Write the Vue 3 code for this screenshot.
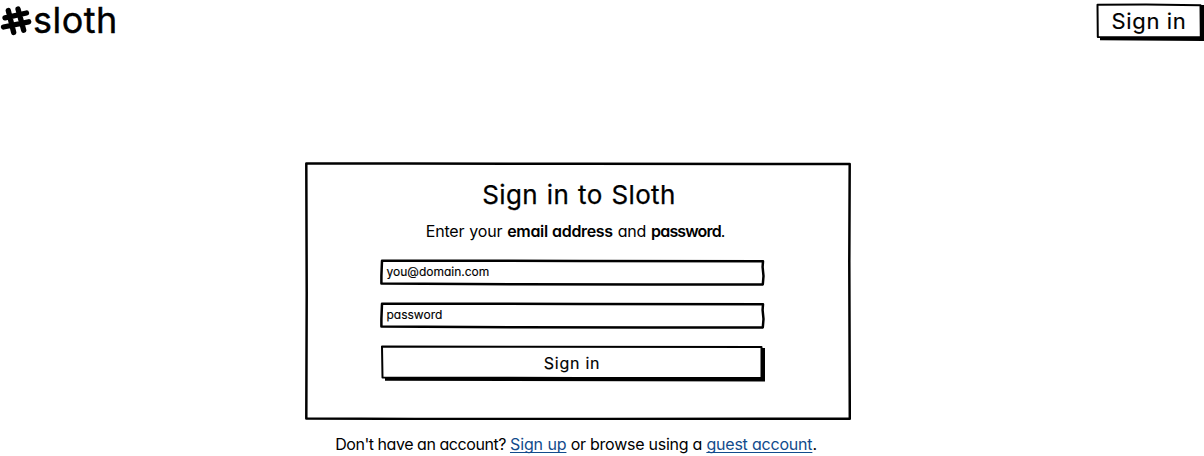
<script setup>
</script>

<template>
  <div class="page">
    <header class="bar">
      <div class="brand">
        <svg class="hash" width="32" height="31" viewBox="0 0 32 31">
          <path d="M8.300 4.500 13.700 26.500M18 3 23.700 24.200M5 11.800 26.500 7M3.500 21 28.700 15.800" />
        </svg>
        <span class="name">sloth</span>
      </div>
      <button class="top-btn">
        <svg class="frame" width="108" height="41" viewBox="0 0 108 41">
          <path class="solid" d="M104 5H108V41L4 40.300V36H104Z" />
          <path class="line" d="M1.500 4.800 50 4.500 104.500 5.200 104.800 37 50 37.300 1.800 37Z" />
        </svg>
        <span>Sign in</span>
      </button>
    </header>

    <main class="main">
      <form class="card" @submit.prevent>
        <svg class="frame" width="546" height="258" viewBox="0 0 546 258">
          <path class="line wide" d="M1.300 1.500 100 1.500 280 1.800 544.700 2 544.300 100 544.800 256.700 300 257 110 256.900 1.300 256.400 1.700 130Z" />
        </svg>
        <h1>Sign in to Sloth</h1>
        <p class="hint">Enter your <b>email address</b> and <b class="tight">password</b>.</p>
        <div class="field">
          <svg class="frame" width="385" height="27" viewBox="0 0 385 27">
            <path class="line wide" d="M2 1.700 80 1.700 200 2 383 2.300 382.600 8 383.500 17 382.800 25.500 270 25.500 140 25.200 1.400 24.600 1.400 17Z" />
          </svg>
          <span>you@domain.com</span>
        </div>
        <div class="field">
          <svg class="frame" width="385" height="27" viewBox="0 0 385 27">
            <path class="line wide" d="M2 1.700 80 1.700 200 2 383 2.300 382.600 8 383.500 17 382.800 25.500 270 25.500 140 25.200 1.400 24.600 1.400 17Z" />
          </svg>
          <span>password</span>
        </div>
        <button class="submit">
          <svg class="frame" width="385" height="37" viewBox="0 0 385 37">
            <path class="solid" d="M381 3H385V36.500L5 35.800V32H381Z" />
            <path class="line" d="M2 1.600 140 1.800 381.500 2 381.500 33 200 33 2.500 32.600Z" />
          </svg>
          <span>Sign in</span>
        </button>
      </form>
      <p class="foot"><span class="ask">Don't have an account? </span><a class="up">Sign up</a><span class="or"> or browse using a </span><a>guest account</a>.</p>
    </main>
  </div>
</template>

<style>
body { background: #fff; }
</style>

<style scoped>
.page { width: 1204px; height: 456px; color: #000; font-family: Inter, "Liberation Sans", sans-serif; font-feature-settings: "cv11"; white-space: nowrap; }
.bar { display: flex; justify-content: space-between; height: 44px; }
.brand { display: flex; }
.hash { margin-top: 6px; fill: none; stroke: #000; stroke-width: 5.3; stroke-linecap: round; }
.name { margin-left: 1px; font-size: 36px; line-height: 41px; letter-spacing: 0.5px; -webkit-text-stroke: 0.4px #000; }
button { position: relative; padding: 0; border: 0; background: none; color: inherit; font: inherit; font-feature-settings: inherit; }
button span { position: relative; -webkit-text-stroke: 0.15px #000; }
.top-btn { width: 108px; height: 41px; font-size: 22px; line-height: 42px; letter-spacing: 0.65px; }
.top-btn span { left: -1px; }
.frame { position: absolute; left: 0; top: 0; display: block; }
.line { fill: #fff; stroke: #000; stroke-width: 2; stroke-linejoin: round; }
.wide { stroke-width: 2.5; }
.solid { fill: #000; }
.main { display: flex; flex-direction: column; align-items: center; width: 1156px; padding-top: 118px; }
.card { position: relative; display: flex; flex-direction: column; align-items: center; width: 546px; height: 258px; }
h1 { position: relative; margin: 17px 0 0 2px; font-size: 26px; font-weight: 400; line-height: 32px; letter-spacing: 0.35px; word-spacing: 1.2px; -webkit-text-stroke: 0.25px #000; }
.hint { position: relative; margin: 10px 5px 0 0; font-size: 16px; line-height: 20px; letter-spacing: -0.2px; word-spacing: 0.7px; }
b { font-weight: 600; letter-spacing: -0.35px; }
.tight { letter-spacing: -0.85px; }
.field { position: relative; width: 385px; height: 27px; margin: 16px 12px 0 0; font-size: 12px; line-height: 25px; -webkit-text-stroke: 0.15px #000; }
.hint + .field { margin-top: 18px; }
.field span { position: relative; display: block; margin-left: 7px; }
.submit { width: 385px; height: 37px; margin: 16px 12px 0 0; font-size: 16px; line-height: 34px; letter-spacing: 0.75px; }
.submit span { top: -1px; }
.foot { margin: 14px 4px 0 0; font-size: 16px; line-height: 20px; letter-spacing: -0.2px; }
.ask { letter-spacing: -0.45px; }
.up { letter-spacing: -0.1px; }
.or { letter-spacing: -0.25px; }
a { color: #124b8c; text-decoration: underline; text-decoration-skip-ink: none; text-underline-offset: 2px; }
</style>
